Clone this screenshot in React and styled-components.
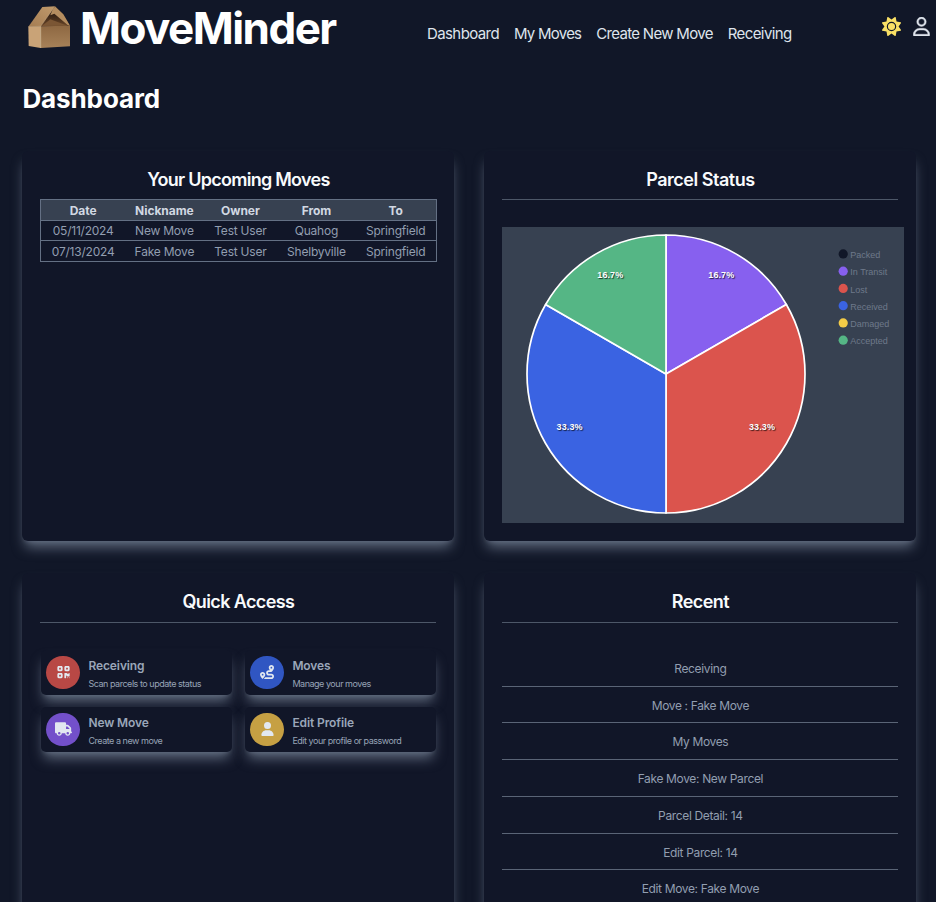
import React from 'react';
import styled, { createGlobalStyle } from 'styled-components';
import { FaQrcode, FaRoute, FaTruck, FaUser, FaSun, FaRegUser } from 'react-icons/fa6';

const GlobalStyle = createGlobalStyle`
  * { box-sizing: border-box; }
  html, body { margin: 0; height: 100%; overflow: hidden; background: #111728; }
  body { font-family: Inter, "Liberation Sans", sans-serif; color: #f8fafc; }
  #root { height: 100%; }
`;

const Page = styled.div`
  height: 902px;
  overflow: hidden;
  background: #111728;
`;

const Header = styled.header`
  display: flex;
  align-items: flex-start;
  height: 56px;
  padding: 0 6.5px 0 27px;
`;

const Brand = styled.a`
  display: flex;
  align-items: flex-start;
  gap: 9px;
  width: 400px;
  height: 56px;
  flex: none;
  color: #ffffff;
  font-size: 44px;
  font-weight: 700;
  letter-spacing: -1.55px;
  line-height: 56px;
`;

const BoxIcon = styled.svg`
  width: 44px;
  height: 46px;
  margin-top: 2px;
`;

const Nav = styled.nav`
  display: flex;
  gap: 15px;
  padding-top: 25px;
`;

const NavLink = styled.a`
  color: #dfe4ec;
  font-size: 15px;
  line-height: 18px;
  letter-spacing: ${(p) => p.$tracking || '-0.6px'};
  white-space: nowrap;
`;

const Actions = styled.div`
  display: flex;
  gap: 11.5px;
  margin-left: auto;
  padding-top: 17px;
`;

const SunIcon = styled(FaSun)`
  width: 19px;
  height: 19px;
  color: #f9e065;
`;

const ProfileIcon = styled(FaRegUser)`
  width: 17px;
  height: 19px;
  color: #dfe4ec;
  stroke: #dfe4ec;
  stroke-width: 10px;
`;

const PageTitle = styled.h1`
  margin: 0;
  padding: 27px 0 0 22.4px;
  height: 95px;
  color: #ffffff;
  font-size: 26px;
  line-height: 32px;
  font-weight: 700;
  letter-spacing: -0.1px;
`;

const Grid = styled.main`
  display: grid;
  grid-template-columns: 432px 432px;
  grid-auto-rows: 390px;
  gap: 32px 30px;
  padding-left: 22.4px;
`;

const glow = `0 9px 13px -3px #606b7e, 0 4px 5px -4px #606b7e`;

const Card = styled.section`
  display: flex;
  flex-direction: column;
  padding: 16px 18px 18px;
  border-radius: 6px;
  background: #111628;
  box-shadow: ${glow};
`;

const CardTitle = styled.h2`
  margin: 0;
  height: ${(p) => p.$height || 33}px;
  flex: none;
  border-bottom: ${(p) => (p.$plain ? 'none' : '1px solid #4d5768')};
  color: #f8fafc;
  font-size: 18px;
  line-height: 26px;
  font-weight: 600;
  letter-spacing: ${(p) => p.$tracking || '-0.6px'};
  text-align: center;
`;

const Table = styled.table`
  width: 396px;
  table-layout: fixed;
  border-collapse: collapse;
  border: 1px solid #647084;
  font-size: 12px;
  text-align: center;
`;

const Col = styled.col`
  width: ${(p) => p.$w}px;
`;

const HeadCell = styled.th`
  height: 21px;
  padding: 2px 1px 0 0;
  background: #374151;
  color: #d1d8e2;
  font-weight: 700;
  line-height: 18px;
  letter-spacing: -0.05px;
`;

const Row = styled.tr`
  border-top: 1px solid #647084;
`;

const Cell = styled.td`
  height: 20.4px;
  padding: 1px 1px 0 0;
  color: #929eb0;
  line-height: 18px;
  letter-spacing: -0.22px;
`;

const Chart = styled.svg`
  display: block;
  width: 402px;
  height: 296px;
  margin-top: 27px;
  flex: none;
  background: #374151;
`;

const SliceLabel = styled.text`
  fill: #ffffff;
  font: 700 9px "Liberation Sans", Arial, sans-serif;
  text-anchor: middle;
  letter-spacing: 0.1px;
  text-shadow: 1px 1px 1px rgba(0, 0, 0, 0.7);
`;

const LegendLabel = styled.text`
  fill: #6e798a;
  font: 9px "Liberation Sans", Arial, sans-serif;
`;

const QuickGrid = styled.div`
  display: grid;
  grid-template-columns: 191.5px 191.5px;
  grid-auto-rows: 44.5px;
  gap: 12.5px;
  padding: 27.5px 0 0 0.5px;
`;

const QuickLink = styled.a`
  display: flex;
  align-items: center;
  gap: 8.5px;
  padding-left: 5.5px;
  border-radius: 5px;
  background: #111628;
  box-shadow: ${glow};
`;

const IconDisc = styled.span`
  display: flex;
  align-items: center;
  justify-content: center;
  width: 33.5px;
  height: 33.5px;
  flex: none;
  border-radius: 50%;
  background: ${(p) => p.$color};
  color: #e2e8f0;

  svg {
    width: ${(p) => p.$size}px;
    height: 14px;
  }
`;

const QuickText = styled.span`
  display: flex;
  flex-direction: column;
  gap: 3px;
  padding-top: 4px;
  white-space: nowrap;
`;

const QuickName = styled.strong`
  color: #9aa6b9;
  font-size: 12px;
  line-height: 16px;
  font-weight: 600;
  letter-spacing: -0.1px;
`;

const QuickHint = styled.span`
  color: #98a4b7;
  font-size: 9px;
  line-height: 14px;
  letter-spacing: -0.47px;
`;

const RecentList = styled.ul`
  margin: 0;
  padding: 27.4px 0 0;
  list-style: none;
`;

const RecentItem = styled.li`
  height: 36.75px;
  padding-top: 1px;
  border-bottom: 1px solid #5a6476;
  color: #929eb0;
  font-size: 12px;
  line-height: 35px;
  letter-spacing: -0.35px;
  text-align: center;
`;

const MOVES = [
  ['05/11/2024', 'New Move', 'Test User', 'Quahog', 'Springfield'],
  ['07/13/2024', 'Fake Move', 'Test User', 'Shelbyville', 'Springfield'],
];

const SLICES = [
  { color: '#8760ef', d: 'M164 147V8A139 139 0 0 1 284.38 77.5Z', x: 219.3, y: 51, label: '16.7%' },
  { color: '#db544d', d: 'M164 147L284.38 77.5A139 139 0 0 1 164 286Z', x: 260, y: 203, label: '33.3%' },
  { color: '#3a63e2', d: 'M164 147V286A139 139 0 0 1 43.62 77.5Z', x: 67.6, y: 203, label: '33.3%' },
  { color: '#55b685', d: 'M164 147L43.62 77.5A139 139 0 0 1 164 8Z', x: 108.3, y: 51, label: '16.7%' },
];

const LEGEND = [
  ['Packed', '#111728'],
  ['In Transit', '#8760ef'],
  ['Lost', '#db544d'],
  ['Received', '#3a63e2'],
  ['Damaged', '#f3cb47'],
  ['Accepted', '#55b685'],
];

const QUICK = [
  { name: 'Receiving', hint: 'Scan parcels to update status', Icon: FaQrcode, color: '#b84845', size: 13 },
  { name: 'Moves', hint: 'Manage your moves', Icon: FaRoute, color: '#3056c2', size: 14 },
  { name: 'New Move', hint: 'Create a new move', Icon: FaTruck, color: '#7350ca', size: 17 },
  { name: 'Edit Profile', hint: 'Edit your profile or password', Icon: FaUser, color: '#c6a043', size: 13 },
];

const RECENT = [
  'Receiving',
  'Move : Fake Move',
  'My Moves',
  'Fake Move: New Parcel',
  'Parcel Detail: 14',
  'Edit Parcel: 14',
  'Edit Move: Fake Move',
];

function BoxHouse() {
  return (
    <BoxIcon viewBox="0 0 132 138">
      <defs>
        <linearGradient id="roof" x1="1" y1="0" x2="0" y2="1">
          <stop offset="0" stopColor="#c09a6c" />
          <stop offset="1" stopColor="#a47c52" />
        </linearGradient>
        <linearGradient id="front" x1="0" y1="0" x2="0" y2="1">
          <stop offset="0" stopColor="#8e6842" />
          <stop offset="1" stopColor="#a78259" />
        </linearGradient>
        <linearGradient id="inside" x1="0" y1="0" x2="0" y2="1">
          <stop offset="0.2" stopColor="#21150f" />
          <stop offset="1" stopColor="#6b4728" />
        </linearGradient>
      </defs>
      <path d="M84 13L109 37L129 71L41 73Z" fill="url(#inside)" />
      <path d="M45 72L70 52L122 71Z" fill="#7b5634" />
      <path d="M4 74L46 15L84 13L41 73Z" fill="url(#roof)" />
      <path d="M84 13L109 37L129 71L122 69L82 35L70 40L76 25Z" fill="#b48d60" />
      <path d="M4 74L41 73V138L5 132Z" fill="#c9a377" />
      <path d="M41 73L129 71V133L41 138Z" fill="url(#front)" />
      <path d="M41 73V138" stroke="#ead0a8" strokeWidth="2" />
      <path d="M4 74L41 73L80 18" fill="none" stroke="#d7b285" strokeWidth="1.5" />
    </BoxIcon>
  );
}

function StatusChart() {
  return (
    <Chart viewBox="0 0 402 296">
      {SLICES.map((s) => (
        <path key={s.color} d={s.d} fill={s.color} stroke="#ffffff" strokeWidth="1.7" strokeLinejoin="round" />
      ))}
      {SLICES.map((s) => (
        <SliceLabel key={s.color} x={s.x} y={s.y}>{s.label}</SliceLabel>
      ))}
      {LEGEND.map(([name, color], i) => (
        <g key={name}>
          <circle cx="341.2" cy={26.9 + i * 17.25} r="4.6" fill={color} />
          <LegendLabel x="348.3" y={31.2 + i * 17.25}>{name}</LegendLabel>
        </g>
      ))}
    </Chart>
  );
}

export default function App() {
  return (
    <Page>
      <GlobalStyle />
      <Header>
        <Brand>
          <BoxHouse />
          MoveMinder
        </Brand>
        <Nav>
          <NavLink>Dashboard</NavLink>
          <NavLink $tracking="-0.75px">My Moves</NavLink>
          <NavLink $tracking="-0.69px">Create New Move</NavLink>
          <NavLink>Receiving</NavLink>
        </Nav>
        <Actions>
          <SunIcon />
          <ProfileIcon />
        </Actions>
      </Header>
      <PageTitle>Dashboard</PageTitle>
      <Grid>
        <Card>
          <CardTitle $plain $height={32} $tracking="-0.74px">Your Upcoming Moves</CardTitle>
          <Table>
            <colgroup>
              <Col $w={85} />
              <Col $w={78} />
              <Col $w={74} />
              <Col $w={78} />
              <Col $w={81} />
            </colgroup>
            <thead>
              <tr>
                {['Date', 'Nickname', 'Owner', 'From', 'To'].map((h) => (
                  <HeadCell key={h}>{h}</HeadCell>
                ))}
              </tr>
            </thead>
            <tbody>
              {MOVES.map((cells) => (
                <Row key={cells[0]}>
                  {cells.map((c, i) => (
                    <Cell key={i}>{c}</Cell>
                  ))}
                </Row>
              ))}
            </tbody>
          </Table>
        </Card>
        <Card>
          <CardTitle $tracking="-0.48px">Parcel Status</CardTitle>
          <StatusChart />
        </Card>
        <Card>
          <CardTitle $height={33.5}>Quick Access</CardTitle>
          <QuickGrid>
            {QUICK.map(({ name, hint, Icon, color, size }) => (
              <QuickLink key={name}>
                <IconDisc $color={color} $size={size}>
                  <Icon />
                </IconDisc>
                <QuickText>
                  <QuickName>{name}</QuickName>
                  <QuickHint>{hint}</QuickHint>
                </QuickText>
              </QuickLink>
            ))}
          </QuickGrid>
        </Card>
        <Card>
          <CardTitle $height={33.5}>Recent</CardTitle>
          <RecentList>
            {RECENT.map((r) => (
              <RecentItem key={r}>{r}</RecentItem>
            ))}
          </RecentList>
        </Card>
      </Grid>
    </Page>
  );
}
